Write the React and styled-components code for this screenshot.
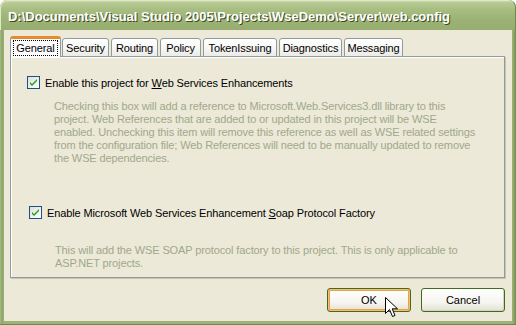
import React from "react";
import styled, { createGlobalStyle } from "styled-components";

const GlobalStyle = createGlobalStyle`
  html, body {
    margin: 0;
    padding: 0;
    background: #ffffff;
  }
  body {
    font-family: "Liberation Sans", Arial, sans-serif;
    font-size: 11px;
    letter-spacing: -0.12px;
  }
`;

const color = {
  frameDark: "#6f8a47",
  client: "#ece9d8",
  tabBorder: "#919b9c",
  text: "#000000",
  hint: "#a0a88a",
  orange: "#e68b2c",
  btnBorder: "#3f6a22",
};

const Window = styled.div`
  position: relative;
  width: 516px;
  height: 325px;
  display: flex;
  flex-direction: column;
  box-sizing: border-box;
  background: linear-gradient(90deg, #a9bd85 0px, #8ea568 2px, #9db478 4px, #9db478 512px, #8ea568 514px, #6f8a47 516px);
  border-radius: 7px 7px 0 0;
  border-bottom: 1px solid ${color.frameDark};
  overflow: hidden;
`;

const TitleBar = styled.div`
  height: 30px;
  flex: none;
  display: flex;
  align-items: center;
  padding: 0 0 0 8px;
  background: linear-gradient(180deg, #d2dfb4 0px, #b6c993 3px, #a7bc80 10px, #9cb274 20px, #98ae70 30px);
  border-radius: 7px 7px 0 0;
  box-shadow: inset 1px 1px 0 #e0e9c8, inset -1px 0 0 #6f8a47;
`;

const Title = styled.span`
  font-family: "Liberation Sans", Arial, sans-serif;
  font-weight: bold;
  font-size: 13px;
  color: #ffffff;
  text-shadow: 1px 1px 0 #3c4c1e;
  letter-spacing: -0.02px;
  margin-top: 2px;
`;

const Client = styled.div`
  flex: 1;
  margin: 0 4px 3px 4px;
  background: ${color.client};
  display: flex;
  flex-direction: column;
  padding: 6px 7px 0 6px;
`;

const TabStrip = styled.div`
  display: flex;
  align-items: flex-end;
  height: 21px;
  position: relative;
  z-index: 1;
  margin-bottom: -1px;
`;

const Tab = styled.div`
  box-sizing: border-box;
  width: ${(p) => p.$w}px;
  height: ${(p) => (p.$active ? 21 : 19)}px;
  margin-right: ${(p) => p.$gap}px;
  display: flex;
  align-items: center;
  justify-content: center;
  border: 1px solid ${color.tabBorder};
  border-bottom: ${(p) => (p.$active ? "none" : `1px solid ${color.tabBorder}`)};
  border-top: ${(p) => (p.$active ? `3px solid ${color.orange}` : `1px solid ${color.tabBorder}`)};
  border-radius: 3px 3px 0 0;
  background: ${(p) =>
    p.$active
      ? "#fcfcfe"
      : "linear-gradient(180deg, #ffffff 0%, #f7f7f5 50%, #ecebe6 100%)"};
  color: ${color.text};
  white-space: nowrap;
`;

const TabLabel = styled.span`
  padding: ${(p) => (p.$focus ? "1px 2px" : "0")};
  outline: ${(p) => (p.$focus ? "1px dotted #000" : "none")};
`;

const Panel = styled.div`
  box-sizing: border-box;
  height: 222px;
  border: 1px solid ${color.tabBorder};
  background: ${color.client};
  box-shadow: inset 1px 1px 0 #ffffff, 1px 1px 0 #c5c2b2;
  display: flex;
  flex-direction: column;
  padding: 19px 0 0 0;
`;

const CheckRow = styled.label`
  display: flex;
  align-items: center;
  gap: 5px;
  padding-left: ${(p) => p.$indent}px;
  margin-top: ${(p) => p.$top || 0}px;
  height: 13px;
  color: ${color.text};
  white-space: nowrap;
`;

const Hint = styled.div`
  padding-left: ${(p) => p.$indent}px;
  margin-top: ${(p) => p.$top}px;
  color: ${color.hint};
  line-height: 13px;
  white-space: nowrap;
`;

const Key = styled.span`
  text-decoration: underline;
  text-underline-offset: 1px;
`;

const ButtonRow = styled.div`
  display: flex;
  justify-content: flex-end;
  gap: 10px;
  margin-top: 10px;
`;

const Button = styled.button`
  box-sizing: border-box;
  width: ${(p) => p.$w}px;
  height: 24px;
  font-family: "Liberation Sans", Arial, sans-serif;
  font-size: 11px;
  color: #000;
  border: 1px solid ${color.btnBorder};
  border-radius: 3px;
  padding: 0;
  background: linear-gradient(180deg, #ffffff 0%, #f6f5f0 60%, #e3e1d4 100%);
  box-shadow: ${(p) =>
    p.$hot
      ? "inset 0 0 0 1px #f6c074, inset 0 0 0 2px #e9a04a"
      : "inset -1px -1px 0 #d6d3c4"};
`;

const Cursor = styled.svg`
  position: absolute;
  left: 385px;
  top: 297px;
  pointer-events: none;
`;

const CheckBox = () => (
  <svg width="13" height="13" viewBox="0 0 13 13">
    <defs>
      <linearGradient id="cbg" x1="0" y1="0" x2="1" y2="1">
        <stop offset="0" stopColor="#dcdcd7" />
        <stop offset="1" stopColor="#ffffff" />
      </linearGradient>
    </defs>
    <rect x="0.5" y="0.5" width="12" height="12" fill="url(#cbg)" stroke="#1c5180" />
    <path d="M3 6 L5 8 L10 3 L10 5 L5 10 L3 8 Z" fill="#21a121" />
  </svg>
);

const tabs = [
  { label: "General", w: 51, gap: 1 },
  { label: "Security", w: 47, gap: 2 },
  { label: "Routing", w: 47, gap: 2 },
  { label: "Policy", w: 41, gap: 2 },
  { label: "TokenIssuing", w: 74, gap: 2 },
  { label: "Diagnostics", w: 63, gap: 2 },
  { label: "Messaging", w: 59, gap: 0 },
];

const App = () => (
  <>
    <GlobalStyle />
    <Window>
      <TitleBar>
        <Title>D:\Documents\Visual Studio 2005\Projects\WseDemo\Server\web.config</Title>
      </TitleBar>
      <Client>
        <TabStrip>
          {tabs.map((t, i) => (
            <Tab key={t.label} $active={i === 0} $w={t.w} $gap={t.gap}>
              <TabLabel $focus={i === 0}>{t.label}</TabLabel>
            </Tab>
          ))}
        </TabStrip>
        <Panel>
          <CheckRow $indent={16}>
            <CheckBox />
            <span>
              Enable this project for <Key>W</Key>eb Services Enhancements
            </span>
          </CheckRow>
          <Hint $indent={43} $top={11}>
            Checking this box will add a reference to Microsoft.Web.Services3.dll library to this
            <br />
            project. Web References that are added to or updated in this project will be WSE
            <br />
            enabled. Unchecking this item will remove this reference as well as WSE related settings
            <br />
            from the configuration file; Web References will need to be manually updated to remove
            <br />
            the WSE dependencies.
          </Hint>
          <CheckRow $indent={18} $top={41}>
            <CheckBox />
            <span>
              Enable Microsoft Web Services Enhancement <Key>S</Key>oap Protocol Factory
            </span>
          </CheckRow>
          <Hint $indent={44} $top={25}>
            This will add the WSE SOAP protocol factory to this project. This is only applicable to
            <br />
            ASP.NET projects.
          </Hint>
        </Panel>
        <ButtonRow>
          <Button $w={84} $hot>OK</Button>
          <Button $w={84}>Cancel</Button>
        </ButtonRow>
      </Client>
      <Cursor width="14" height="22" viewBox="0 0 14 22">
        <path
          d="M0.5 0.5 L0.5 16.5 L4.5 12.5 L7.5 19.5 L10 18.5 L7.2 11.8 L12.5 11.8 Z"
          fill="#ffffff"
          stroke="#000000"
          strokeWidth="1"
        />
      </Cursor>
    </Window>
  </>
);

export default App;
